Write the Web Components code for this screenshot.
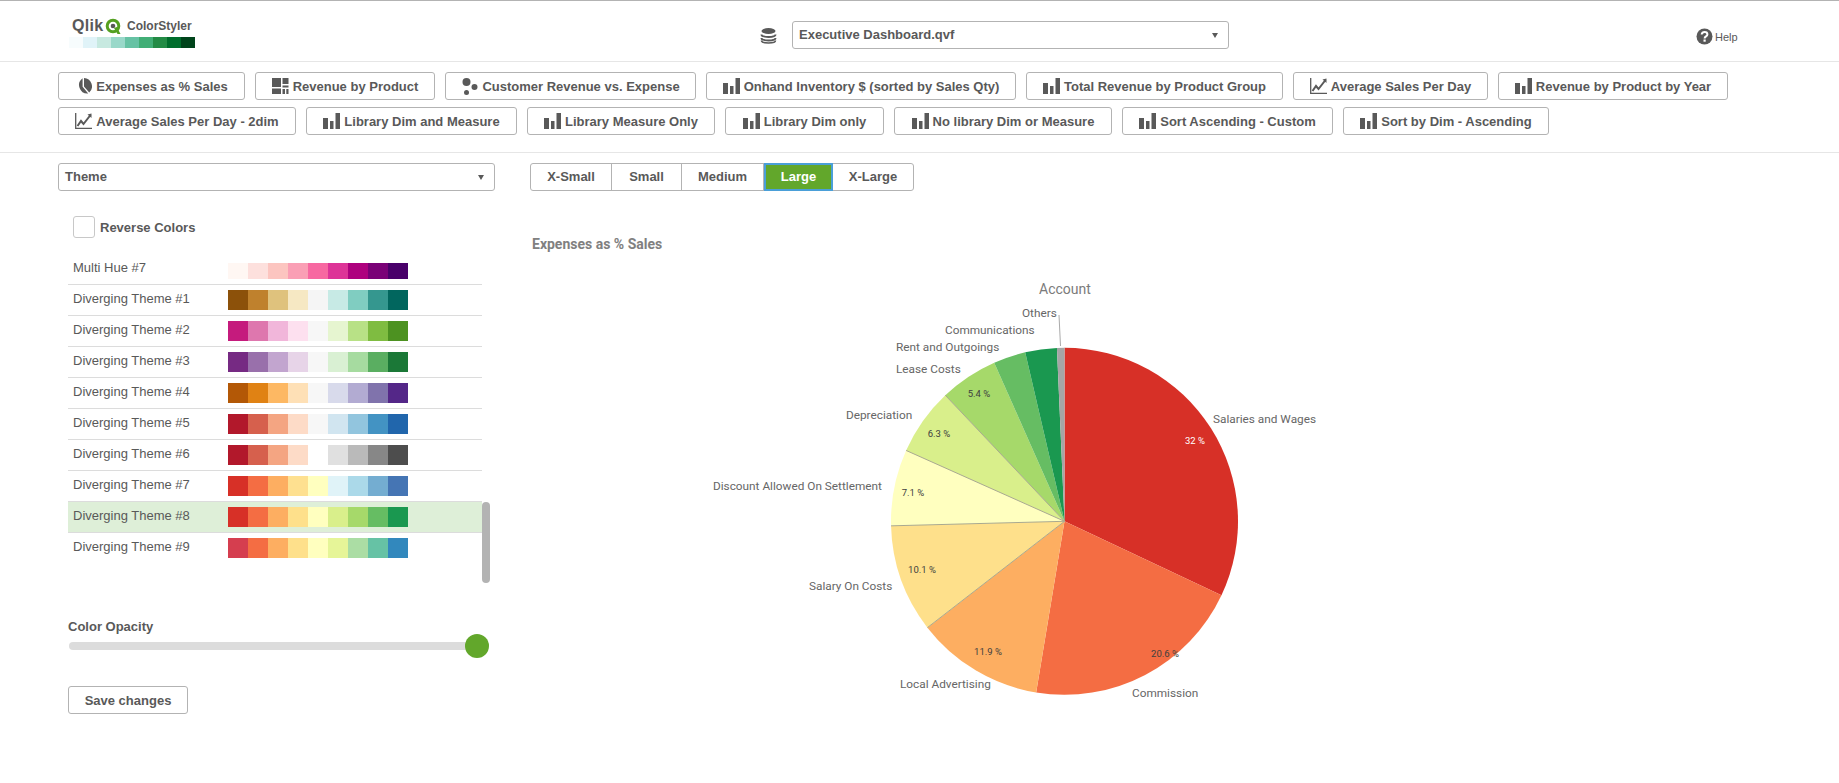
<!DOCTYPE html>
<html>
<head>
<meta charset="utf-8">
<title>Qlik ColorStyler</title>
<style>
  html, body { margin: 0; background: #fff; }
  body { width: 1839px; height: 783px; overflow: hidden; font: 13px "Liberation Sans", Arial, sans-serif; color: #595959; }
</style>
</head>
<body>
<app-header></app-header>
<chart-bar>
  <q-button icon="pie" width="187">Expenses as % Sales</q-button>
  <q-button icon="tree" width="180">Revenue by Product</q-button>
  <q-button icon="scatter" width="251">Customer Revenue vs. Expense</q-button>
  <q-button icon="bars" width="310">Onhand Inventory $ (sorted by Sales Qty)</q-button>
  <q-button icon="bars" width="257">Total Revenue by Product Group</q-button>
  <q-button icon="line" width="195">Average Sales Per Day</q-button>
  <q-button icon="bars" width="230">Revenue by Product by Year</q-button>
  <q-button icon="line" width="238">Average Sales Per Day - 2dim</q-button>
  <q-button icon="bars" width="211">Library Dim and Measure</q-button>
  <q-button icon="bars" width="188">Library Measure Only</q-button>
  <q-button icon="bars" width="159">Library Dim only</q-button>
  <q-button icon="bars" width="218">No library Dim or Measure</q-button>
  <q-button icon="bars" width="211">Sort Ascending - Custom</q-button>
  <q-button icon="bars" width="206">Sort by Dim - Ascending</q-button>
</chart-bar>
<main-area>
  <theme-panel></theme-panel>
  <chart-panel></chart-panel>
</main-area>

<script>
const icons = {
  pie: `<svg width="17" height="17" viewBox="0 0 17 17"><path fill="#595959" d="M7.600 .2v8.600l5.600 6.600A8.400 8.400 0 0 1 7.600 .2zM9 0a8.400 8.400 0 0 1 5.200 14.600L9 8.400z"/></svg>`,
  tree: `<svg width="17" height="16" viewBox="0 0 17 16"><path fill="#595959" d="M0 0h9v9H0zM10.500 0H16.500v6H10.500zM10.500 7.500H16.500V9.500H10.500zM0 10.500h9V16H0zM10.500 11h2.500v5h-2.500zM14.300 11h2.200v5h-2.200z"/></svg>`,
  scatter: `<svg width="17" height="17" viewBox="0 0 17 17"><circle cx="5.500" cy="4" r="4" fill="#595959"/><circle cx="13.500" cy="9" r="3" fill="#595959"/><circle cx="5.500" cy="14.500" r="2.500" fill="#595959"/></svg>`,
  bars: `<svg width="17" height="16" viewBox="0 0 17 16"><path fill="#595959" d="M0 5h5v11H0zM7 8h3.500v8H7zM12.500 0H17v16h-4.500z"/></svg>`,
  line: `<svg width="17" height="16" viewBox="0 0 17 16"><path fill="none" stroke="#595959" stroke-width="1.300" d="M.7 0v15.300H17"/><path fill="none" stroke="#595959" stroke-width="2" d="M2.500 13l3.500-5 2.500 3L15.500 2"/><path fill="#595959" d="M12.500 1.500L16.500 .5V5z"/></svg>`,
  db: `<svg width="17" height="16" viewBox="0 0 17 16"><ellipse cx="8.500" cy="3" rx="7" ry="3" fill="#595959"/><path fill="none" stroke="#595959" stroke-width="2" d="M1.500 6.500c0 3.300 14 3.300 14 0M1.500 10c0 3.300 14 3.300 14 0"/><path fill="none" stroke="#595959" stroke-width="1.600" d="M1.500 12.500c0 3.300 14 3.300 14 0"/></svg>`
};

class QIcon extends HTMLElement {
  constructor() {
    super();
    this.attachShadow({ mode: 'open' });
  }

  connectedCallback() {
    this.shadowRoot.innerHTML = `
      <style>:host { display: inline-flex; flex: none; } svg { display: block; }</style>
      ${icons[this.getAttribute('name')] || ''}
    `;
  }
}
customElements.define('q-icon', QIcon);

class QButton extends HTMLElement {
  constructor() {
    super();
    this.attachShadow({ mode: 'open' });
  }

  connectedCallback() {
    let icon = this.getAttribute('icon');
    let width = this.getAttribute('width');
    this.shadowRoot.innerHTML = `
      <style>
        :host {
          display: inline-flex;
          align-items: center;
          justify-content: center;
          gap: 4px;
          box-sizing: border-box;
          width: ${width}px;
          height: 28px;
          border: 1px solid #b3b3b3;
          border-radius: 3px;
          background: #fff;
          font: bold 13px "Liberation Sans", Arial, sans-serif;
          color: #595959;
          white-space: nowrap;
        }
      </style>
      ${icon ? `<q-icon name="${icon}"></q-icon>` : ''}
      <slot></slot>
    `;
  }
}
customElements.define('q-button', QButton);

class QSelect extends HTMLElement {
  constructor() {
    super();
    this.attachShadow({ mode: 'open' });
  }

  connectedCallback() {
    this.shadowRoot.innerHTML = `
      <style>
        :host {
          display: flex;
          align-items: center;
          justify-content: space-between;
          box-sizing: border-box;
          height: 28px;
          padding: 0 10px 0 6px;
          border: 1px solid #b3b3b3;
          border-radius: 3px;
          font: bold 13px "Liberation Sans", Arial, sans-serif;
          color: #595959;
        }
        .text { padding-bottom: 2px; }
        .caret { width: 0; height: 0; border: 3.5px solid transparent; border-top: 5px solid #595959; border-bottom: 0; }
      </style>
      <span class="text"><slot></slot></span>
      <span class="caret"></span>
    `;
  }
}
customElements.define('q-select', QSelect);

class AppHeader extends HTMLElement {
  constructor() {
    super();
    this.attachShadow({ mode: 'open' });
  }

  connectedCallback() {
    let ramp = ['#f7fcfd', '#e0f3f8', '#c7e9e0', '#99d8c9', '#66c2a4', '#41ae76', '#238b45', '#006d2c', '#00441b'];
    this.shadowRoot.innerHTML = `
      <style>
        :host {
          display: flex;
          align-items: flex-start;
          height: 60px;
          border-top: 1px solid #b3b3b3;
          border-bottom: 1px solid #e6e6e6;
          color: #595959;
          font-family: "Liberation Sans", Arial, sans-serif;
        }
        .logo { width: 126px; margin: 14px 0 0 69px; }
        .brand { display: flex; align-items: center; height: 22px; padding-left: 3px; white-space: nowrap; }
        .qlik { width: 31px; font: bold 16px "Liberation Sans", Arial, sans-serif; letter-spacing: .3px; }
        .name { font: bold 12px "Liberation Sans", Arial, sans-serif; margin-left: 6px; }
        .brand svg { margin-left: 2px; flex: none; }
        .ramp { display: flex; height: 11px; }
        .ramp i { flex: 1; }
        .db { margin: 27px 15px 0 565px; }
        q-select { width: 437px; margin-top: 20px; font-size: 13px; }
        .help { display: flex; align-items: center; gap: 2px; margin: 27px 0 0 467px; font-size: 11px; }
        .help svg { display: block; }
      </style>
      <div class="logo">
        <div class="brand">
          <span class="qlik">Qlik</span>
          <svg width="16" height="17" viewBox="0 0 16 17"><circle cx="8" cy="8" r="5.800" fill="none" stroke="#54a021" stroke-width="3"/><circle cx="8" cy="8" r="2.300" fill="#595959"/><path d="M9 10l3.500 6h3l-3.700-7z" fill="#54a021"/></svg>
          <span class="name">ColorStyler</span>
        </div>
        <div class="ramp">${ramp.map((c) => `<i style="background:${c}"></i>`).join('')}</div>
      </div>
      <q-icon class="db" name="db"></q-icon>
      <q-select>Executive Dashboard.qvf</q-select>
      <div class="help">
        <svg width="17" height="17" viewBox="0 0 17 17"><circle cx="8.500" cy="8.500" r="8" fill="#595959"/><path fill="none" stroke="#fff" stroke-width="2" d="M5.700 6.600c0-3.600 5.700-3.300 5.700-.2 0 2-2.800 2-2.800 4"/><rect x="7.500" y="11.500" width="2.200" height="2.200" fill="#fff"/></svg>
        <span>Help</span>
      </div>
    `;
  }
}
customElements.define('app-header', AppHeader);

class ChartBar extends HTMLElement {
  constructor() {
    super();
    this.attachShadow({ mode: 'open' });
  }

  connectedCallback() {
    this.shadowRoot.innerHTML = `
      <style>
        :host {
          display: flex;
          flex-wrap: wrap;
          gap: 7px 10px;
          height: 63px;
          padding: 10px 100px 17px 58px;
          border-bottom: 1px solid #e6e6e6;
        }
      </style>
      <slot></slot>
    `;
  }
}
customElements.define('chart-bar', ChartBar);

class MainArea extends HTMLElement {
  constructor() {
    super();
    this.attachShadow({ mode: 'open' });
  }

  connectedCallback() {
    this.shadowRoot.innerHTML = `
      <style>:host { display: flex; align-items: flex-start; }</style>
      <slot></slot>
    `;
  }
}
customElements.define('main-area', MainArea);

class ColorRow extends HTMLElement {
  constructor() {
    super();
    this.attachShadow({ mode: 'open' });
  }

  connectedCallback() {
    let colors = this.getAttribute('colors').split(' ');
    this.shadowRoot.innerHTML = `
      <style>
        :host {
          display: flex;
          align-items: center;
          box-sizing: border-box;
          height: 31px;
          padding-left: 5px;
          border-bottom: 1px solid #dcdcdc;
          font: 13px "Liberation Sans", Arial, sans-serif;
          color: #595959;
        }
        :host([selected]) { background: #deefd8; }
        :host([last]) { border-bottom-color: transparent; }
        /* first row sits half under the top edge of the scroller, its text is cut there */
        :host([cut]) .label { clip-path: inset(3px 0 0 0); }
        .label { width: 155px; padding-bottom: 3px; white-space: nowrap; }
        .ramp { display: flex; }
        .ramp i { width: 20px; height: 20px; }
      </style>
      <span class="label"><slot></slot></span>
      <span class="ramp">${colors.map((c) => `<i style="background:${c}"></i>`).join('')}</span>
    `;
  }
}
customElements.define('color-row', ColorRow);

class ThemePanel extends HTMLElement {
  constructor() {
    super();
    this.attachShadow({ mode: 'open' });
  }

  connectedCallback() {
    let themes = [
      ['Multi Hue #7', '#fff7f3 #fde0dd #fcc5c0 #fa9fb5 #f768a1 #dd3497 #ae017e #7a0177 #49006a'],
      ['Diverging Theme #1', '#8c510a #bf812d #dfc27d #f6e8c3 #f5f5f5 #c7eae5 #80cdc1 #35978f #01665e'],
      ['Diverging Theme #2', '#c51b7d #de77ae #f1b6da #fde0ef #f7f7f7 #e6f5d0 #b8e186 #7fbc41 #4d9221'],
      ['Diverging Theme #3', '#762a83 #9970ab #c2a5cf #e7d4e8 #f7f7f7 #d9f0d3 #a6dba0 #5aae61 #1b7837'],
      ['Diverging Theme #4', '#b35806 #e08214 #fdb863 #fee0b6 #f7f7f7 #d8daeb #b2abd2 #8073ac #542788'],
      ['Diverging Theme #5', '#b2182b #d6604d #f4a582 #fddbc7 #f7f7f7 #d1e5f0 #92c5de #4393c3 #2166ac'],
      ['Diverging Theme #6', '#b2182b #d6604d #f4a582 #fddbc7 #ffffff #e0e0e0 #bababa #878787 #4d4d4d'],
      ['Diverging Theme #7', '#d73027 #f46d43 #fdae61 #fee090 #ffffbf #e0f3f8 #abd9e9 #74add1 #4575b4'],
      ['Diverging Theme #8', '#d73027 #f46d43 #fdae61 #fee08b #ffffbf #d9ef8b #a6d96a #66bd63 #1a9850'],
      ['Diverging Theme #9', '#d53e4f #f46d43 #fdae61 #fee08b #ffffbf #e6f598 #abdda4 #66c2a5 #3288bd']
    ];
    let rows = themes.map((t, i) => {
      let flag = i === 0 ? 'cut' : i === 8 ? 'selected' : i === 9 ? 'last' : '';
      return `<color-row colors="${t[1]}" ${flag}>${t[0]}</color-row>`;
    }).join('');
    this.shadowRoot.innerHTML = `
      <style>
        :host {
          display: block;
          box-sizing: border-box;
          width: 530px;
          padding: 10px 35px 0 58px;
          font: bold 13px "Liberation Sans", Arial, sans-serif;
          color: #595959;
        }
        .reverse { display: flex; align-items: center; gap: 5px; margin: 25px 0 25px 15px; }
        .box { box-sizing: border-box; width: 22px; height: 22px; border: 1px solid #c8c8c8; border-radius: 3px; }
        .list { position: relative; width: 422px; height: 320px; margin-left: 10px; overflow: hidden; }
        .rows { width: 414px; margin-top: -9px; }
        .thumb { position: absolute; right: 0; top: 239px; width: 8px; height: 81px; border-radius: 4px; background: #b3b3b3; }
        .opacity { margin: 36px 0 0 10px; line-height: 16px; }
        .slider { position: relative; width: 408px; height: 8px; margin: 7px 0 0 11px; border-radius: 4px; background: #dcdcdc; }
        .knob { position: absolute; right: -12px; top: -8px; width: 24px; height: 24px; border-radius: 50%; background: #62a72b; }
        q-button { margin: 36px 0 0 10px; }
      </style>
      <q-select>Theme</q-select>
      <div class="reverse"><span class="box"></span><span>Reverse Colors</span></div>
      <div class="list">
        <div class="rows">${rows}</div>
        <div class="thumb"></div>
      </div>
      <div class="opacity">Color Opacity</div>
      <div class="slider"><div class="knob"></div></div>
      <q-button width="120">Save changes</q-button>
    `;
  }
}
customElements.define('theme-panel', ThemePanel);

class SizeGroup extends HTMLElement {
  constructor() {
    super();
    this.attachShadow({ mode: 'open' });
  }

  connectedCallback() {
    let sizes = [['X-Small', 81], ['Small', 70], ['Medium', 82], ['Large', 69], ['X-Large', 80]];
    this.shadowRoot.innerHTML = `
      <style>
        :host {
          display: inline-flex;
          height: 28px;
          box-sizing: border-box;
          border: 1px solid #b3b3b3;
          border-radius: 3px;
          font: bold 13px "Liberation Sans", Arial, sans-serif;
          color: #595959;
        }
        span { display: flex; align-items: center; justify-content: center; box-sizing: border-box; padding-bottom: 1px; border-right: 1px solid #b3b3b3; }
        span:last-child { border-right: 0; }
        .on { position: relative; margin: -1px 0; background: #62a72b; color: #fff; border: 2px solid #4a9fd8; }
      </style>
      ${sizes.map((s) => `<span class="${s[0] === 'Large' ? 'on' : ''}" style="width:${s[1]}px">${s[0]}</span>`).join('')}
    `;
  }
}
customElements.define('size-group', SizeGroup);

class PieChart extends HTMLElement {
  constructor() {
    super();
    this.attachShadow({ mode: 'open' });
  }

  point(deg, r) {
    let a = deg * Math.PI / 180;
    return [(1064.5 + r * Math.sin(a)).toFixed(2), (521.3 - r * Math.cos(a)).toFixed(2)];
  }

  connectedCallback() {
    let r = 173.5;
    let slices = [
      [115.2, '#d73027'], [189.4, '#f46d43'], [232.2, '#fdae61'], [268.5, '#fee08b'], [294.1, '#ffffbf'],
      [316.6, '#d9ef8b'], [336.1, '#a6d96a'], [346.9, '#66bd63'], [357.5, '#1a9850'], [360, '#a5a5a5']
    ];
    let start = 0;
    let paths = slices.map((s) => {
      let p0 = this.point(start, r);
      let p1 = this.point(s[0], r);
      let large = s[0] - start > 180 ? 1 : 0;
      start = s[0];
      return `<path fill="${s[1]}" d="M1064.5 521.3L${p0[0]} ${p0[1]}A${r} ${r} 0 ${large} 1 ${p1[0]} ${p1[1]}Z"/>`;
    }).join('');
    let seams = [232.2, 268.5, 294.1, 316.6].map((d) => {
      let p = this.point(d, r);
      return `<line x1="1064.5" y1="521.3" x2="${p[0]}" y2="${p[1]}" stroke="#a9a98f" stroke-width="1"/>`;
    }).join('');
    let labels = [
      [1022, 312, 'Others'], [945, 329, 'Communications'], [896, 346, 'Rent and Outgoings'], [896, 368, 'Lease Costs'],
      [846, 414, 'Depreciation'], [713, 485, 'Discount Allowed On Settlement'], [809, 585, 'Salary On Costs'],
      [900, 683, 'Local Advertising'], [1132, 692, 'Commission'], [1213, 418, 'Salaries and Wages']
    ].map((l) => `<text class="label" x="${l[0]}" y="${l[1]}" dy=".4em">${l[2]}</text>`).join('');
    let values = [
      [1195, 441, '32 %', '#fff'], [1165, 654, '20.6 %', '#404040'], [988, 652, '11.9 %', '#404040'], [922, 570, '10.1 %', '#404040'],
      [913, 493, '7.1 %', '#404040'], [939, 434, '6.3 %', '#404040'], [979, 394, '5.4 %', '#404040']
    ].map((v) => `<text class="value" x="${v[0]}" y="${v[1]}" dy=".35em" fill="${v[3]}">${v[2]}</text>`).join('');
    this.shadowRoot.innerHTML = `
      <style>
        :host { display: block; }
        svg { display: block; }
        text { font-family: Roboto, "Liberation Sans", sans-serif; }
        .label { font-size: 11.8px; fill: #666; }
        .value { font-size: 9.5px; text-anchor: middle; }
        .title { font-size: 14px; fill: #7b7b7b; }
      </style>
      <svg width="1309" height="480" viewBox="530 260 1309 480">
        ${paths}
        ${seams}
        <line x1="1059" y1="315" x2="1060.500" y2="346" stroke="#aaa"/>
        <text class="title" x="1039" y="289" dy=".35em">Account</text>
        ${labels}
        ${values}
      </svg>
    `;
  }
}
customElements.define('pie-chart', PieChart);

class ChartPanel extends HTMLElement {
  constructor() {
    super();
    this.attachShadow({ mode: 'open' });
  }

  connectedCallback() {
    this.shadowRoot.innerHTML = `
      <style>
        :host { display: block; flex: 1; padding-top: 10px; }
        h2 { margin: 45px 0 8px 2px; font: bold 14px/16px Roboto, "Liberation Sans", sans-serif; color: #808080; }
      </style>
      <size-group></size-group>
      <h2>Expenses as % Sales</h2>
      <pie-chart></pie-chart>
    `;
  }
}
customElements.define('chart-panel', ChartPanel);
</script>
</body>
</html>
